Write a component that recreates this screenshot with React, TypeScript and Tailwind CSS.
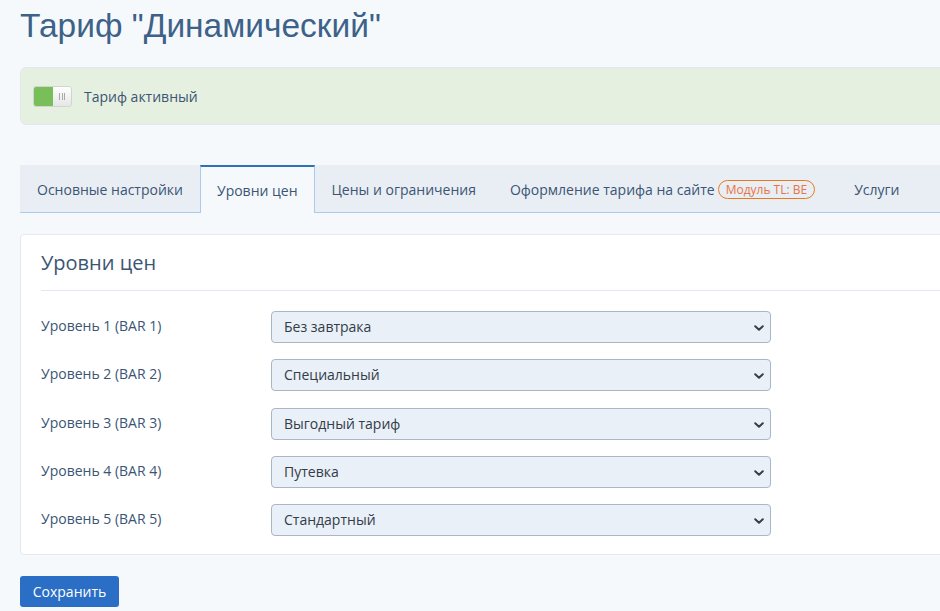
import React from "react";

const levels = [
  { label: "Уровень 1 (BAR 1)", value: "Без завтрака" },
  { label: "Уровень 2 (BAR 2)", value: "Специальный" },
  { label: "Уровень 3 (BAR 3)", value: "Выгодный тариф" },
  { label: "Уровень 4 (BAR 4)", value: "Путевка" },
  { label: "Уровень 5 (BAR 5)", value: "Стандартный" },
];

function Chevron() {
  return (
    <svg width="10" height="6" viewBox="0 0 10 6" className="absolute right-[6px] top-[13px]">
      <path d="M1.2 1.2L5 4.8 8.8 1.2" fill="none" stroke="#3a3f45" strokeWidth="2" strokeLinecap="round" strokeLinejoin="round" />
    </svg>
  );
}

export default function App() {
  return (
    <div
      className="min-h-[611px] w-[940px] overflow-hidden bg-[#f5f9fc] pl-[20px] text-[#3b5573]"
      style={{ fontFamily: '"Open Sans", "Noto Sans", sans-serif' }}
    >
      <h1
        className="pt-[6px] text-[33.5px] leading-[40px] text-[#3d6188]"
        style={{ fontFamily: '"Liberation Sans", Arial, sans-serif' }}
      >
        Тариф "Динамический"
      </h1>

      <div className="mt-[21px] flex h-[58px] w-[960px] items-center rounded-l-[6px] border border-[#dfe9ee] bg-[#e6f0e1] pl-[12px]">
        <div className="flex h-[21px] w-[39px] overflow-hidden rounded-[3px] border border-[#cfd6d0]">
          <div className="w-[19px] bg-[#78bf59]" />
          <div className="flex flex-1 items-center justify-center gap-[1.5px] bg-gradient-to-b from-[#ffffff] to-[#e6e6e6]">
            <span className="h-[7px] w-px bg-[#a8a8a8]" />
            <span className="h-[7px] w-px bg-[#a8a8a8]" />
            <span className="h-[7px] w-px bg-[#a8a8a8]" />
          </div>
        </div>
        <span className="ml-[12px] text-[14px]">Тариф активный</span>
      </div>

      <div className="mt-[40px] flex h-[48px] w-[960px] border-b border-[#a9cbec] bg-[#e9eef5] text-[14px]">
        <div className="flex items-center px-[17px] pt-[2px]">Основные настройки</div>
        <div className="-mb-px flex items-center border-x border-t-2 border-x-[#a9cbec] border-t-[#2f72b3] bg-[#f5f9fc] px-[16px]">
          Уровни цен
        </div>
        <div className="flex items-center px-[17px] pt-[2px]">Цены и ограничения</div>
        <div className="flex items-center pl-[17px] pr-[17px] pt-[2px]">
          Оформление тарифа на сайте
          <span className="ml-[3px] rounded-full border border-[#e8791f] px-[7px] text-[12px] leading-[17px] text-[#e8743f]">
            Модуль TL: BE
          </span>
        </div>
        <div className="flex items-center pl-[22px] pt-[2px]">Услуги</div>
      </div>

      <div className="mt-[21px] w-[960px] rounded-[4px] border border-[#e3eaf1] bg-white px-[20px] pb-[18px]">
        <div className="flex h-[56px] items-end border-b border-[#e1e8ef] pb-[14px] text-[20px] leading-[26px]">
          Уровни цен
        </div>
        <div className="flex flex-col gap-[16.3px] pt-[20px]">
          {levels.map((l) => (
            <div key={l.label} className="flex h-[32px] items-center">
              <div className="w-[230px] pb-[3px] text-[14px]">{l.label}</div>
              <div className="relative h-[32px] w-[500px] rounded-[4px] border border-[#aab6c6] bg-[#e9f0f8]">
                <div className="pl-[12px] text-[14px] leading-[30px] text-[#333c47]">{l.value}</div>
                <Chevron />
              </div>
            </div>
          ))}
        </div>
      </div>

      <button className="mt-[21px] h-[31px] w-[99px] rounded-[3px] bg-[#2a6ec5] text-[14px] text-white">
        Сохранить
      </button>
    </div>
  );
}
